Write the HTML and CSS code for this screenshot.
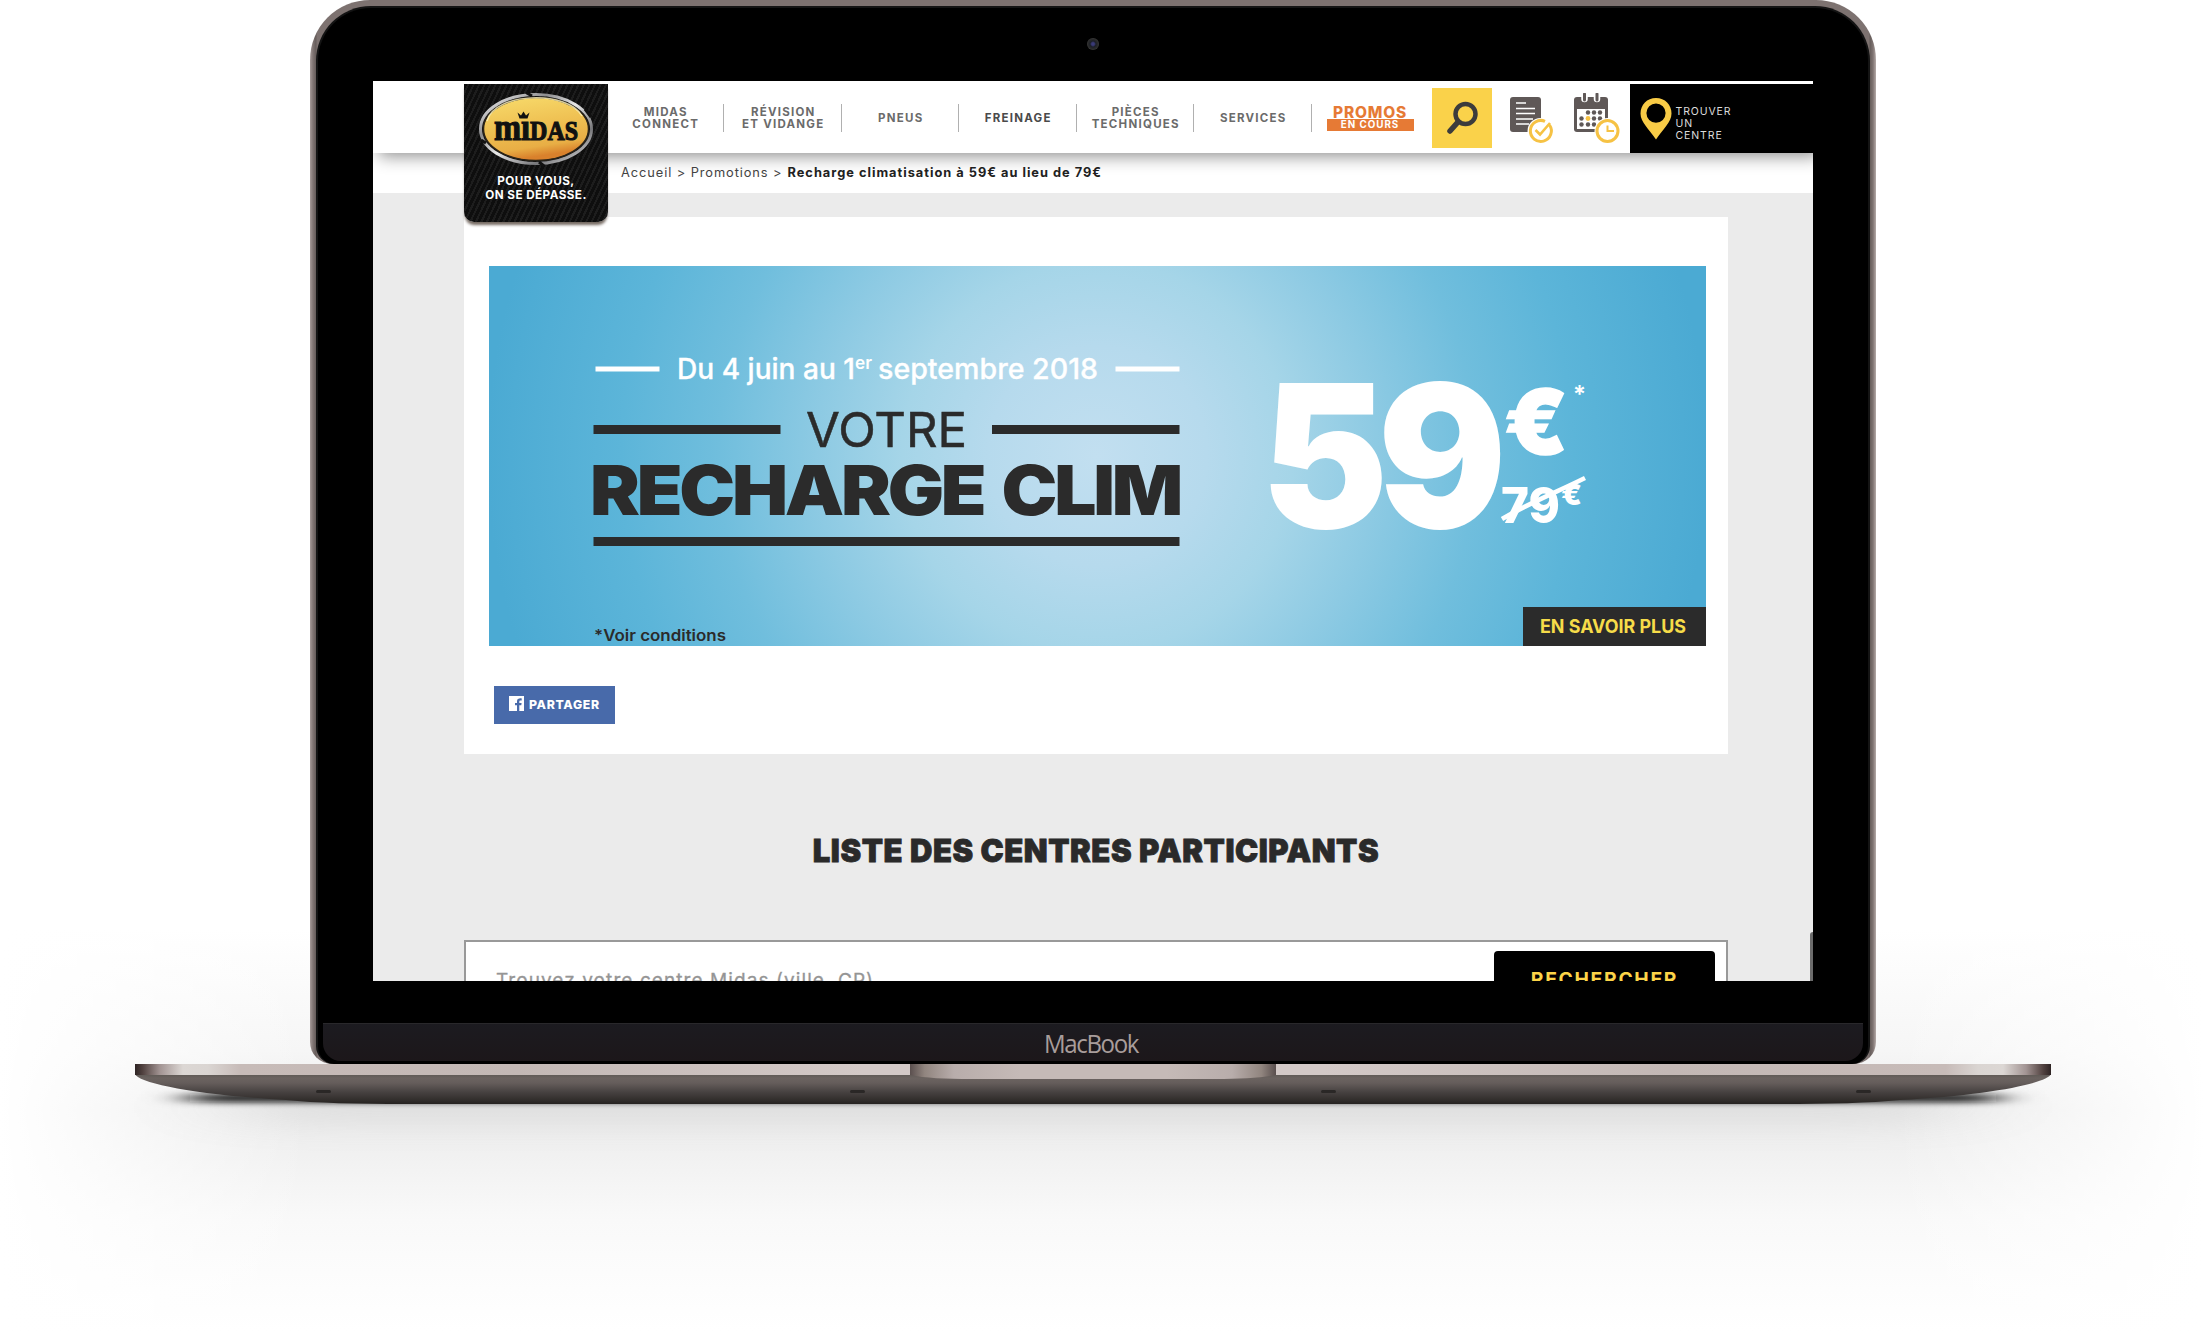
FILE: index.html
```html
<!DOCTYPE html>
<html lang="fr">
<head>
<meta charset="utf-8">
<title>Midas - Recharge climatisation</title>
<link rel="stylesheet" href="styles.css">
</head>
<body>
<div class="stage">
  <div class="glow"></div>
  <div class="lid">
    <div class="bezel">
      <div class="camera-row"><span class="camera"></span></div>
      <div class="screen">
        <header class="header">
          <a class="logo">
            <svg class="logo-badge" viewBox="0 0 116 92">
              <defs>
                <linearGradient id="gold" x1="0" y1="0" x2="0.25" y2="1">
                  <stop offset="0" stop-color="#f8dc6c"/><stop offset=".5" stop-color="#efc153"/><stop offset=".85" stop-color="#e8ae45"/><stop offset="1" stop-color="#d9812c"/>
                </linearGradient>
                <linearGradient id="chrome" x1="0" y1="0" x2="1" y2="1">
                  <stop offset="0" stop-color="#fff"/><stop offset=".3" stop-color="#8d8d8f"/><stop offset=".5" stop-color="#e8e8e8"/><stop offset=".75" stop-color="#77777a"/><stop offset="1" stop-color="#eee"/>
                </linearGradient>
              </defs>
              <ellipse cx="58" cy="46" rx="55.500" ry="34.500" fill="none" stroke="url(#chrome)" stroke-width="3"/>
              <path d="M48 9.500 L54 13 M107 26 L113 34 M66 83 L61 79 M3 57 L8 60" stroke="#111" stroke-width="3"/>
              <ellipse cx="58" cy="46" rx="52.500" ry="31.500" fill="url(#gold)" stroke="#2b2418" stroke-width="1.500"/>
              <path d="M9 38 C16 9 90 7 104 33" fill="none" stroke="#fff4bd" stroke-width="1.500" opacity=".8"/>
              <path d="M39.500 29.500 l2 6 h8 l2 -6 -3.500 3 -2.500 -4 -2.500 4z" fill="#111"/>
              <text x="16" y="56.500" class="logo-word" textLength="84" lengthAdjust="spacingAndGlyphs"><tspan class="logo-low">mı</tspan>DAS</text>
            </svg>
            <span class="logo-tag">POUR VOUS,<br>ON SE DÉPASSE.</span>
          </a>
          <nav class="nav">
            <a>MIDAS<br>CONNECT</a>
            <a>RÉVISION<br>ET VIDANGE</a>
            <a>PNEUS</a>
            <a class="dark">FREINAGE</a>
            <a>PIÈCES<br>TECHNIQUES</a>
            <a>SERVICES</a>
            <a class="promos"><b>PROMOS</b><span>EN COURS</span></a>
          </nav>
          <div class="tools">
            <a class="search">
              <svg width="60" height="60" viewBox="0 0 60 60"><circle cx="33.500" cy="26" r="10" fill="none" stroke="#3c3c3c" stroke-width="4.500"/><path d="M26 34 L18 43" stroke="#3c3c3c" stroke-width="5.500" stroke-linecap="round"/></svg>
            </a>
            <svg class="ico" width="46" height="52" viewBox="0 0 46 52">
              <rect x="1" y="4" width="31" height="35" rx="3" fill="#5f5857"/>
              <path d="M7 10H17M7 15.500H26M7 20.500H26M7 26H24M7 31H20" stroke="#fff" stroke-width="1.600"/>
              <circle cx="31.500" cy="38" r="13" fill="#fff"/>
              <path d="M40.500 32 A10.500 10.500 0 1 1 36 28.300" fill="none" stroke="#f6c244" stroke-width="3"/>
              <path d="M26.500 37 L31 41.500 L41 30" fill="none" stroke="#f6c244" stroke-width="2.600"/>
            </svg>
            <svg class="ico cal" width="48" height="52" viewBox="0 0 48 52">
              <rect x="1" y="4" width="34" height="35" rx="3" fill="#5f5857"/>
              <rect x="4" y="16" width="28" height="20" fill="#fff"/>
              <path d="M11.500 2V6M24 2V6" stroke="#fff" stroke-width="6.500" stroke-linecap="round"/>
              <path d="M11.500 1V7M24 1V7" stroke="#5f5857" stroke-width="3" stroke-linecap="round"/>
              <g fill="#5f5857"><circle cx="15" cy="19.500" r="2.200"/><circle cx="21" cy="19.500" r="2.200"/><circle cx="27" cy="19.500" r="2.200"/><circle cx="8.500" cy="25.500" r="2.200"/><circle cx="21" cy="25.500" r="2.200"/><circle cx="27" cy="25.500" r="2.200"/><circle cx="8.500" cy="31.500" r="2.200"/><circle cx="15" cy="31.500" r="2.200"/><circle cx="21" cy="31.500" r="2.200"/></g>
              <circle cx="15" cy="25.500" r="2.400" fill="#f6c244"/>
              <circle cx="34.500" cy="38" r="13" fill="#fff"/>
              <circle cx="34.500" cy="38" r="10.500" fill="none" stroke="#f6c244" stroke-width="3"/>
              <path d="M34.500 32.500V38H41" fill="none" stroke="#f6c244" stroke-width="2"/>
            </svg>
          </div>
          <a class="find">
            <svg width="32" height="42" viewBox="0 0 32 42"><path fill="#f8cb46" fill-rule="evenodd" d="M16 0C7 0 .500 6.800.500 15.500C.500 24 9 31 16 41.500C23 31 31.500 24 31.500 15.500C31.500 6.800 25 0 16 0ZM16 5.500A9.600 9.600 0 1 1 16 24.700A9.600 9.600 0 0 1 16 5.500Z"/></svg>
            <span>TROUVER<br>UN<br>CENTRE</span>
          </a>
        </header>
        <div class="crumbs"><span class="crumb-path">Accueil &gt; Promotions &gt;</span><b class="crumb-here">Recharge climatisation à 59€ au lieu de 79€</b></div>
        <main class="page">
          <section class="card">
            <svg class="banner" viewBox="0 0 1217 380">
              <defs>
                <radialGradient id="sky" gradientUnits="userSpaceOnUse" cx="608" cy="190" r="610">
                  <stop offset="0" stop-color="#c2dff0"/><stop offset=".18" stop-color="#b6daed"/><stop offset=".32" stop-color="#a5d5e8"/><stop offset=".46" stop-color="#8dcae3"/><stop offset=".62" stop-color="#70bedd"/><stop offset=".78" stop-color="#5cb5d9"/><stop offset="1" stop-color="#4baad3"/>
                </radialGradient>
              </defs>
              <rect width="1217" height="380" fill="url(#sky)"/>
              <path d="M106.500 103H170.500M626.500 103H690.500" stroke="#fff" stroke-width="5"/>
              <text class="date" x="188" y="113" textLength="178" lengthAdjust="spacingAndGlyphs">Du 4 juin au 1</text>
              <text class="sup" x="366" y="103" textLength="17" lengthAdjust="spacingAndGlyphs">er</text>
              <text class="date" x="389" y="113" textLength="220" lengthAdjust="spacingAndGlyphs">septembre 2018</text>
              <path d="M104.500 163.500H291.500M503 163.500H690.500M104.500 275.500H690.500" stroke="#2b2b2b" stroke-width="9"/>
              <text class="votre" x="317" y="180.500" textLength="161" lengthAdjust="spacingAndGlyphs">VOTRE</text>
              <text class="title" x="101" y="249" textLength="590" lengthAdjust="spacingAndGlyphs">RECHARGE CLIM</text>
              <text class="cond" x="105" y="374.500" textLength="132" lengthAdjust="spacingAndGlyphs">*Voir conditions</text>
              <text class="price" x="772" y="262" textLength="235" lengthAdjust="spacingAndGlyphs">59</text>
              <text class="euro" x="1015" y="188" textLength="64" lengthAdjust="spacingAndGlyphs">€</text>
              <text class="star" x="1084" y="137">*</text>
              <text class="old" x="1012" y="257" textLength="59" lengthAdjust="spacingAndGlyphs">79</text>
              <text class="old-euro" x="1072" y="239" textLength="21" lengthAdjust="spacingAndGlyphs">€</text>
              <path d="M1013 253 C1038 238 1070 225 1096 212" fill="none" stroke="#fff" stroke-width="4.500"/>
              <rect x="1034" y="341" width="183" height="39" fill="#2b2b2b"/>
              <text class="more" x="1051" y="367" textLength="146" lengthAdjust="spacingAndGlyphs">EN SAVOIR PLUS</text>
            </svg>
            <a class="share">
              <svg width="15" height="15" viewBox="0 0 15 15"><path fill="#fff" fill-rule="evenodd" d="M0 0H15V15H10.300V9.300H12.300L12.600 7H10.300V5.600C10.300 4.900 10.600 4.500 11.500 4.500H12.700V2.400C10 2.100 8 2.800 8 5.300V7H6V9.300H8V15H0Z"/></svg>
              <span>PARTAGER</span>
            </a>
          </section>
          <h2 class="heading">LISTE DES CENTRES PARTICIPANTS</h2>
          <div class="finder"><span class="placeholder">Trouvez votre centre Midas (ville, CP)</span><span class="go">RECHERCHER</span></div>
        </main>
        <i class="scrollbar"></i>
      </div>
      <div class="chin"><svg width="98" height="30" viewBox="0 0 98 30"><text class="brand" x="0" y="22" textLength="94" lengthAdjust="spacingAndGlyphs">MacBook</text></svg></div>
    </div>
  </div>
  <svg class="base" viewBox="0 0 2204 267">
    <defs>
      <linearGradient id="edge" x1="135" x2="2051" gradientUnits="userSpaceOnUse">
        <stop offset="0" stop-color="#2e2424"/><stop offset=".004" stop-color="#50413f"/><stop offset=".013" stop-color="#a29493"/><stop offset=".025" stop-color="#dcd7d4"/><stop offset=".038" stop-color="#dad5d2"/><stop offset=".055" stop-color="#c7bbb8"/><stop offset=".2" stop-color="#c3b8b5"/><stop offset=".38" stop-color="#d3c9c7"/><stop offset=".62" stop-color="#d3c9c7"/><stop offset=".8" stop-color="#c3b8b5"/><stop offset=".945" stop-color="#c7bbb8"/><stop offset=".962" stop-color="#dad5d2"/><stop offset=".975" stop-color="#dcd7d4"/><stop offset=".987" stop-color="#a29493"/><stop offset=".996" stop-color="#50413f"/><stop offset="1" stop-color="#2e2424"/>
      </linearGradient>
      <linearGradient id="body" x1="0" x2="0" y1="0" y2="1">
        <stop offset="0" stop-color="#5d5854"/><stop offset=".14" stop-color="#6b6360"/><stop offset=".3" stop-color="#655d5b"/><stop offset=".6" stop-color="#474241"/><stop offset=".9" stop-color="#2f2b29"/><stop offset="1" stop-color="#252220"/>
      </linearGradient>
      <linearGradient id="notch" x1="0" x2="1"><stop offset="0" stop-color="#5a4f4e"/><stop offset=".04" stop-color="#91857f"/><stop offset=".12" stop-color="#b8adab"/><stop offset=".3" stop-color="#c5bab7"/><stop offset=".7" stop-color="#c5bab7"/><stop offset=".88" stop-color="#b8adab"/><stop offset=".96" stop-color="#91857f"/><stop offset="1" stop-color="#5a4f4e"/></linearGradient>
      <filter id="soft" x="-10%" y="-300%" width="120%" height="700%"><feGaussianBlur stdDeviation="20 3"/></filter>
      <filter id="wide" x="-20%" y="-200%" width="140%" height="500%"><feGaussianBlur stdDeviation="60 16"/></filter>
    </defs>
    <rect x="240" y="30" width="1706" height="26" fill="#999" opacity=".22" filter="url(#wide)"/>
    <rect x="190" y="30" width="1806" height="8" fill="#0a0a0a" filter="url(#soft)"/>
    <path d="M135 10H2051C2048 19 1990 31 1900 36C1870 39 1830 40 1780 40H406C356 40 316 39 286 36C196 31 138 19 135 10Z" fill="url(#body)"/>
    <rect x="135" y="0" width="1916" height="11" fill="url(#edge)"/>
    <path d="M910 0H1276V11C1262 14 1240 15 1215 15H971C946 15 924 14 910 11Z" fill="url(#notch)"/>
    <g fill="#2a2726"><rect x="316" y="26" width="15" height="3" rx="1.500"/><rect x="850" y="26" width="15" height="3" rx="1.500"/><rect x="1321" y="26" width="15" height="3" rx="1.500"/><rect x="1856" y="26" width="15" height="3" rx="1.500"/></g>
  </svg>
</div>
</body>
</html>
```
FILE: styles.css
```css
* { box-sizing: border-box; }
body { margin: 0; background: #fff; font-family: Inter, "Liberation Sans", sans-serif; }
.stage { position: relative; width: 2204px; height: 1331px; overflow: hidden; display: flex; flex-direction: column; }
.glow { position: absolute; left: 0; right: 0; top: 930px; bottom: 0; background: linear-gradient(90deg, #fff, rgba(255,255,255,0) 14%, rgba(255,255,255,0) 86%, #fff), linear-gradient(#fff, #f6f6f6 120px, #ececec 180px, #f1f1f1 225px, #f9f9f9 290px, #fdfdfd 360px, #fff); }
.lid { position: relative; width: 1566px; height: 1064px; margin-left: 310px; padding: 6px 6px 0; border-radius: 60px 60px 22px 22px; background: linear-gradient(90deg, #a79c9a, #7f7472 3px, #655c5a 6px, #7d7270 7px, #7d7270 1559px, #655c5a 1560px, #7f7472 1563px, #b5aaa8); }
.bezel { height: 1058px; border-radius: 55px 55px 18px 18px; background: #000; border: 2px solid #141414; border-bottom: 0; padding: 0 5px; display: flex; flex-direction: column; }
.camera-row { height: 73px; display: flex; justify-content: center; padding-top: 30px; }
.camera { width: 12px; height: 12px; border-radius: 50%; background: radial-gradient(#3a3a78 0 15%, #1c1f26 35%, #2c2c2c 60%, #4a4a4a 80%); }
.screen { position: relative; width: 1440px; height: 900px; margin-left: 50px; background: #ebebeb; overflow: hidden; display: flex; flex-direction: column; }
.chin { height: 38px; margin-top: 42px; background: linear-gradient(#1c1b20, #1c171a); border-top: 1px solid #29282b; border-radius: 0 0 18px 18px; display: flex; justify-content: center; padding-top: 7px; }
.brand { font: 400 26px "Open Sans", sans-serif; fill: #a89d9b; letter-spacing: -1.500px; }

.header { position: relative; z-index: 2; flex: none; display: flex; height: 72px; padding: 3px 0 0 91px; background: #fff; box-shadow: 6px 3px 16px rgba(0,0,0,.45); }
.logo { flex: none; width: 144px; height: 138px; display: flex; flex-direction: column; align-items: center; border-radius: 0 0 10px 10px; background: repeating-linear-gradient(115deg, #0e0e0e 0 3px, #1d1d1d 3px 5px); box-shadow: 0 4px 3px -1px #756a62; }
.logo-badge { flex: none; width: 116px; height: 92px; margin-top: -1px; }
.logo-word { font: 700 28px "Liberation Serif", serif; fill: #111; stroke: #111; stroke-width: 1.200px; }
.logo-low { font-size: 38px; }
.logo-tag { color: #fff; font-weight: 700; font-size: 11.700px; line-height: 14px; text-align: center; letter-spacing: .45px; margin-top: -1px; white-space: nowrap; }
.nav { display: flex; align-items: center; margin-left: -1.500px; height: 62px; padding-top: 6px; }
.nav a { width: 117.500px; height: 28px; display: flex; align-items: center; justify-content: center; text-align: center; border-right: 1px solid #b0b0b0; padding-left: 2px; color: #6b6b6b; font-weight: 700; font-size: 11.500px; line-height: 12px; letter-spacing: 1.250px; white-space: nowrap; }
.nav a.dark { color: #4a4a4a; }
.nav a.promos { width: 117px; border: 0; padding: 0; flex-direction: column; color: #e67a35; letter-spacing: .8px; }
.promos b { font-size: 15.500px; line-height: 13px; font-weight: 800; }
.promos span { width: 87px; height: 12px; line-height: 12px; font-size: 9.800px; background: #e67a35; color: #fff; letter-spacing: 1px; }
.tools { display: flex; margin-left: 3px; padding-top: 4px; }
.search { width: 60px; height: 60px; background: #fad24a; }
.ico { margin: 5px 0 0 17px; }
.cal { margin: 5px 0 0 18px; }
.find { display: flex; margin-left: auto; width: 183px; height: 69px; padding: 14px 0 0 9.500px; gap: 4px; background: #000; color: #ddd; font-size: 10.500px; line-height: 12px; letter-spacing: .9px; }
.find span { margin-top: 8px; }
.crumbs { flex: none; height: 40px; background: #fff; padding: 12px 0 0 248px; display: flex; gap: 5px; font-size: 12.800px; line-height: 16px; color: #444; white-space: nowrap; letter-spacing: .93px; }
.crumb-here { color: #222; letter-spacing: 1px; }
.page { flex: none; padding: 24px 85px 0 91px; display: flex; flex-direction: column; }
.card { height: 537px; background: #fff; padding: 49px 22px 0 25px; }
.banner { display: block; width: 1217px; height: 380px; }
.banner text { font-family: Inter, sans-serif; fill: #2b2b2b; }
.banner .date { font-size: 28.500px; font-weight: 500; fill: #fff; stroke: #fff; stroke-width: .3px; }
.banner .sup { font-size: 17px; font-weight: 600; fill: #fff; }
.banner .votre { font-size: 48px; font-weight: 400; stroke: #2b2b2b; stroke-width: .5px; }
.banner .title { font-size: 69px; font-weight: 900; letter-spacing: -3px; word-spacing: 6px; }
.banner .cond { font-size: 15.500px; font-weight: 600; }
.banner .price { font-size: 199px; font-weight: 900; letter-spacing: -11px; fill: #fff; }
.banner .euro { font-size: 90px; font-weight: 900; fill: #fff; stroke: #fff; stroke-width: 1.500px; }
.banner .star { font-size: 24px; font-weight: 600; fill: #fff; }
.banner .old { font-size: 49px; font-weight: 800; fill: #fff; }
.banner .old-euro { font-size: 28px; font-weight: 900; fill: #fff; }
.banner .more { font-size: 19px; font-weight: 700; fill: #f6dc49; }
.share { display: flex; gap: 5px; width: 121px; height: 38px; margin: 40px 0 0 5px; padding: 10px 0 0 15px; background: #486aaa; color: #fff; font-weight: 800; font-size: 12.300px; line-height: 18px; letter-spacing: .65px; }
.heading { margin: 79px 0 0; height: 37px; text-align: center; font-size: 31px; line-height: 36px; font-weight: 900; color: #2a2a2a; letter-spacing: .58px; -webkit-text-stroke: .8px #2a2a2a; white-space: nowrap; }
.finder { height: 90px; margin-top: 70px; border: 2px solid #999; background: #fff; display: flex; justify-content: space-between; padding: 9px 11px 0 30px; }
.placeholder { margin-top: 17.500px; color: #959595; font-size: 19px; line-height: 24px; letter-spacing: 1.080px; -webkit-text-stroke: .3px #959595; }
.go { width: 221px; height: 60px; background: #000; border-radius: 4px; color: #fcd448; font-weight: 700; font-size: 19.300px; line-height: 24px; padding-top: 16px; text-align: center; letter-spacing: 1.700px; }
.scrollbar { position: absolute; right: 0; bottom: 0; width: 3px; height: 49px; border-radius: 3px 0 0 0; background: #6b6b6b; }
.base { flex: none; position: relative; display: block; width: 2204px; height: 267px; }
```
